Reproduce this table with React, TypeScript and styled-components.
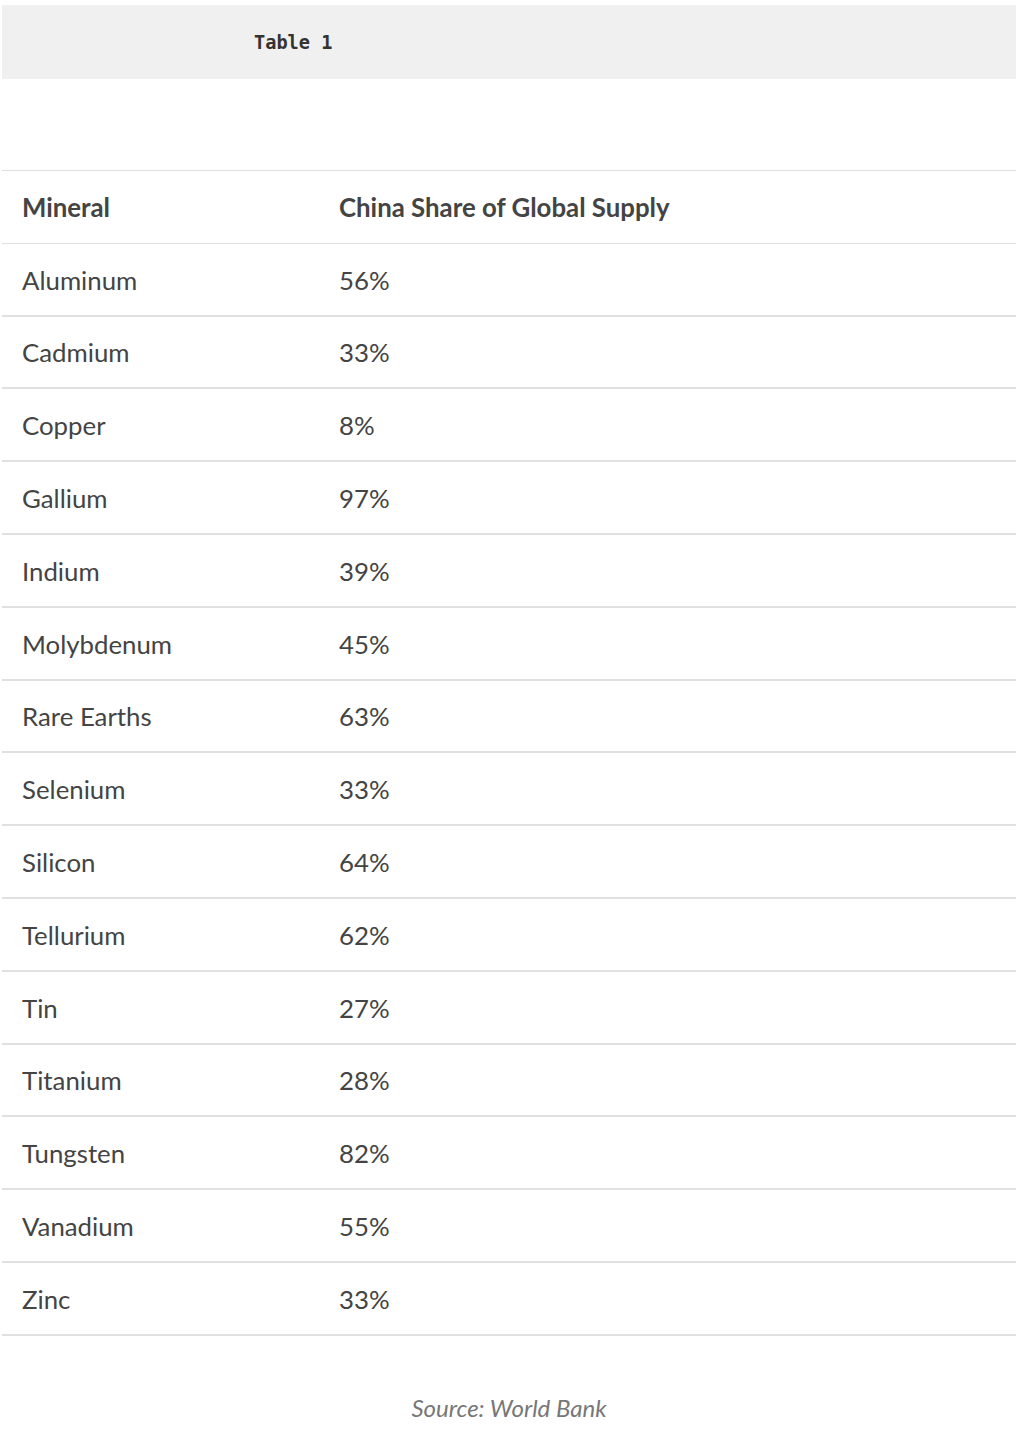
import React from "react";
import styled, { createGlobalStyle } from "styled-components";

const Global = createGlobalStyle`
  html, body { margin: 0; padding: 0; background: #fff; }
  body { font-family: Lato, "Open Sans", sans-serif; }
`;

const Page = styled.div`
  padding: 5px 2px 0 2px;
  display: flex;
  flex-direction: column;
`;

const TitleBar = styled.div`
  height: 74px;
  background: #f0f0f0;
  display: flex;
  align-items: center;
  padding-left: 252px;
  padding-top: 1px;
  box-sizing: border-box;
`;

const Title = styled.span`
  font-family: "DejaVu Sans Mono", "Liberation Mono", monospace;
  font-weight: bold;
  font-size: 18.6px;
  color: #333;
`;

const Table = styled.div`
  margin-top: 91px;
  border-top: 1px solid #dedede;
  display: flex;
  flex-direction: column;
`;

const Row = styled.div<{ $head?: boolean }>`
  height: 72.8px;
  box-sizing: border-box;
  border-bottom: ${(p) => (p.$head ? "1px" : "2px")} solid #e0e0e0;
  display: grid;
  grid-template-columns: 317px 1fr;
  align-items: center;
  padding-left: 20px;
  font-size: 25.8px;
  font-weight: ${(p) => (p.$head ? 700 : 400)};
  color: #444;
`;

const Cell = styled.div`
  padding-top: 1px;
`;

const Source = styled.div`
  margin-top: 57px;
  text-align: center;
  font-style: italic;
  font-size: 24px;
  color: #777;
`;

const rows: [string, string][] = [
  ["Aluminum", "56%"],
  ["Cadmium", "33%"],
  ["Copper", "8%"],
  ["Gallium", "97%"],
  ["Indium", "39%"],
  ["Molybdenum", "45%"],
  ["Rare Earths", "63%"],
  ["Selenium", "33%"],
  ["Silicon", "64%"],
  ["Tellurium", "62%"],
  ["Tin", "27%"],
  ["Titanium", "28%"],
  ["Tungsten", "82%"],
  ["Vanadium", "55%"],
  ["Zinc", "33%"],
];

export default function App() {
  return (
    <>
      <Global />
      <Page>
        <TitleBar>
          <Title>Table 1</Title>
        </TitleBar>
        <Table>
          <Row $head>
            <Cell>Mineral</Cell>
            <Cell>China Share of Global Supply</Cell>
          </Row>
          {rows.map(([m, v]) => (
            <Row key={m}>
              <Cell>{m}</Cell>
              <Cell>{v}</Cell>
            </Row>
          ))}
        </Table>
        <Source>Source: World Bank</Source>
      </Page>
    </>
  );
}
